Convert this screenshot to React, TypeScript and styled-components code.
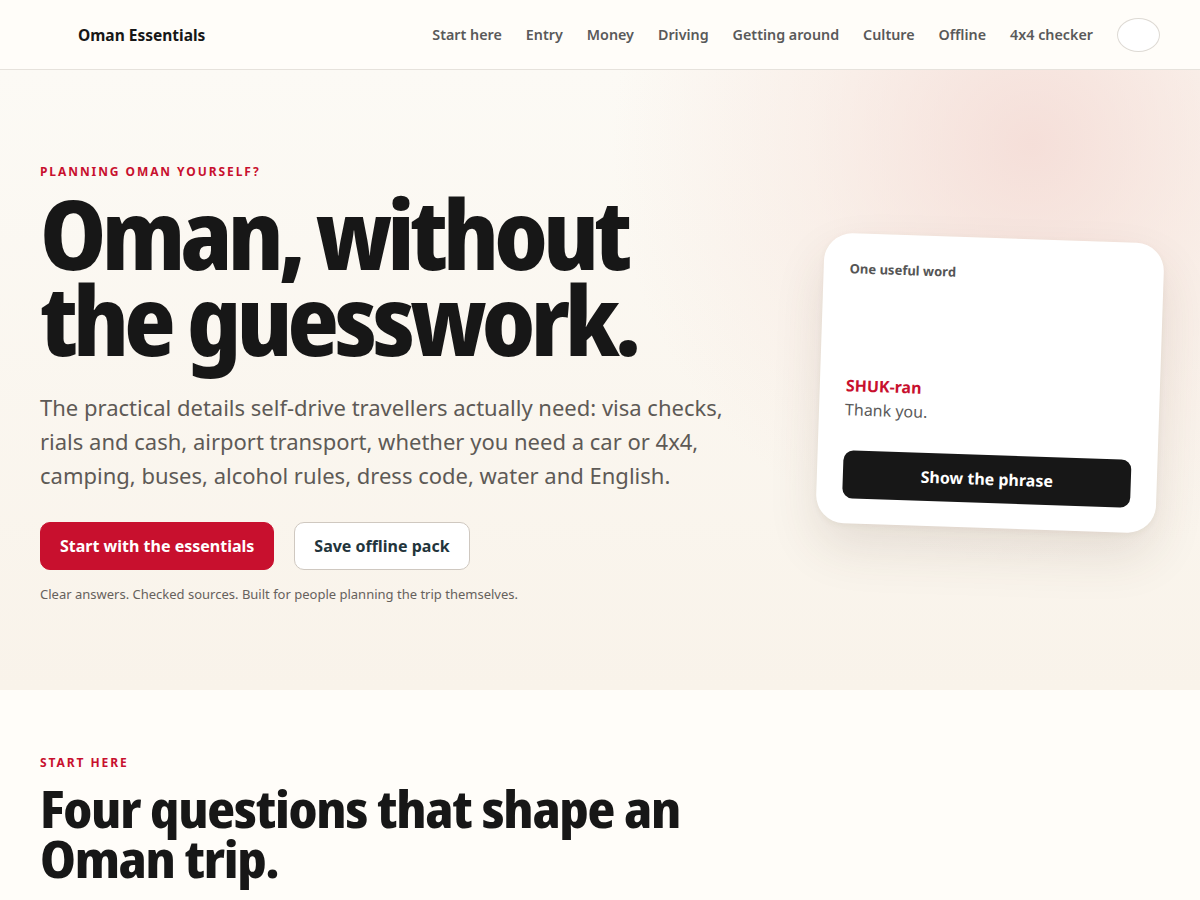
import React from 'react';
import styled, { createGlobalStyle } from 'styled-components';

const GlobalStyle = createGlobalStyle`
  * { box-sizing: border-box; }
  body {
    margin: 0;
    font-family: 'Noto Sans', 'Open Sans', sans-serif;
    background: #fffdf9;
    color: #171717;
  }
  button { font-family: inherit; }
`;

const Header = styled.header`
  height: 70px;
  border-bottom: 1px solid #e6e2dc;
  background: #fffdf9;
  display: flex;
  align-items: center;
  justify-content: space-between;
  padding: 0 40px;
`;

const Brand = styled.a`
  display: flex;
  align-items: center;
  gap: 10px;
  font-size: 15.5px;
  font-weight: 700;
  color: #171717;
  text-decoration: none;
`;

const BrandMark = styled.span`
  width: 28px;
  height: 28px;
`;

const Nav = styled.nav`
  display: flex;
  align-items: center;
  gap: 24px;
`;

const NavLink = styled.a`
  font-size: 14.3px;
  font-weight: 600;
  color: #595959;
  text-decoration: none;
`;

const Toggle = styled.button`
  width: 43px;
  height: 34px;
  border-radius: 50%;
  border: 1px solid #dedad4;
  background: #fff;
`;

const Hero = styled.section`
  background:
    radial-gradient(circle at 86% 12%, rgba(243, 214, 208, 0.75) 0, rgba(245, 222, 214, 0.35) 220px, rgba(248, 236, 228, 0) 420px),
    linear-gradient(180deg, #fcfaf5 0%, #f9f3ea 100%);
  padding: 93px 40px 87px;
`;

const HeroGrid = styled.div`
  display: grid;
  grid-template-columns: 1fr 340px;
  gap: 60px;
  align-items: center;
`;

const Eyebrow = styled.p`
  margin: 0;
  font-size: 12px;
  font-weight: 700;
  letter-spacing: 0.16em;
  text-transform: uppercase;
  color: #c8102e;
`;

const Title = styled.h1`
  margin: 10px 0 0;
  font-family: 'Noto Sans Display', 'Noto Sans', sans-serif;
  font-size: 96px;
  line-height: 0.9;
  font-weight: 800;
  font-stretch: 87.5%;
  letter-spacing: -0.05em;
  color: #171717;
`;

const Lead = styled.p`
  margin: 27px 0 0;
  max-width: 700px;
  font-size: 22px;
  line-height: 34px;
  color: #5e5a56;
`;

const Actions = styled.div`
  display: flex;
  gap: 20px;
  margin-top: 30px;
`;

const Button = styled.a<{ $variant: 'primary' | 'secondary' }>`
  display: inline-flex;
  align-items: center;
  height: 48px;
  padding: 0 19px;
  border-radius: 10px;
  font-size: 16px;
  font-weight: 700;
  text-decoration: none;
  background: ${p => (p.$variant === 'primary' ? '#c8102e' : '#fff')};
  color: ${p => (p.$variant === 'primary' ? '#fff' : '#22343b')};
  border: 1px solid ${p => (p.$variant === 'primary' ? '#c8102e' : '#cfc8c0')};
`;

const Note = styled.p`
  margin: 15px 0 0;
  font-size: 13px;
  color: #66615c;
`;

const PhraseCard = styled.div`
  width: 340px;
  height: 290px;
  background: #fff;
  border-radius: 28px;
  padding: 26px 26px 25px;
  transform: rotate(1.9deg);
  box-shadow: 0 24px 50px rgba(80, 60, 40, 0.12), 0 2px 6px rgba(80, 60, 40, 0.06);
  display: flex;
  flex-direction: column;
`;

const CardLabel = styled.span`
  font-size: 13px;
  font-weight: 700;
  color: #555;
`;

const Word = styled.span`
  margin-top: auto;
  font-size: 16px;
  font-weight: 700;
  color: #c8102e;
`;

const Meaning = styled.span`
  margin-top: 2px;
  font-size: 16px;
  color: #5a5a5a;
`;

const DarkButton = styled.button`
  margin-top: 30px;
  height: 48px;
  width: 100%;
  border: none;
  border-radius: 10px;
  background: #171717;
  color: #fff;
  font-size: 16px;
  font-weight: 700;
`;

const Section = styled.section`
  padding: 64px 40px 40px;
  background: #fffdf9;
`;

const SectionTitle = styled.h2`
  margin: 12px 0 0;
  font-family: 'Noto Sans Display', 'Noto Sans', sans-serif;
  font-size: 52px;
  line-height: 50px;
  font-weight: 800;
  font-stretch: 87.5%;
  letter-spacing: -0.025em;
  max-width: 700px;
`;

const links = ['Start here', 'Entry', 'Money', 'Driving', 'Getting around', 'Culture', 'Offline', '4x4 checker'];

export default function App() {
  return (
    <>
      <GlobalStyle />
      <Header>
        <Brand href="#">
          <BrandMark />
          Oman Essentials
        </Brand>
        <Nav>
          {links.map(l => (
            <NavLink key={l} href="#">{l}</NavLink>
          ))}
          <Toggle aria-label="Menu" />
        </Nav>
      </Header>
      <Hero>
        <HeroGrid>
          <div>
            <Eyebrow>Planning Oman yourself?</Eyebrow>
            <Title>Oman, without<br />the guesswork.</Title>
            <Lead>
              The practical details self-drive travellers actually need: visa checks, rials and cash, airport
              transport, whether you need a car or 4x4, camping, buses, alcohol rules, dress code, water and English.
            </Lead>
            <Actions>
              <Button $variant="primary" href="#">Start with the essentials</Button>
              <Button $variant="secondary" href="#">Save offline pack</Button>
            </Actions>
            <Note>Clear answers. Checked sources. Built for people planning the trip themselves.</Note>
          </div>
          <PhraseCard>
            <CardLabel>One useful word</CardLabel>
            <Word>SHUK-ran</Word>
            <Meaning>Thank you.</Meaning>
            <DarkButton>Show the phrase</DarkButton>
          </PhraseCard>
        </HeroGrid>
      </Hero>
      <Section>
        <Eyebrow>Start here</Eyebrow>
        <SectionTitle>Four questions that shape an Oman trip.</SectionTitle>
      </Section>
    </>
  );
}
